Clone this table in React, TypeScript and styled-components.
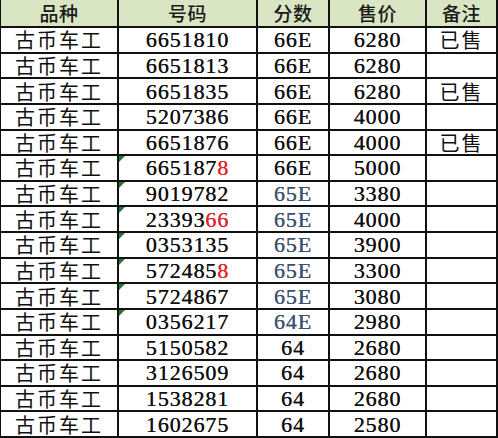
import React from "react";
import styled, { createGlobalStyle } from "styled-components";

const GlobalStyle = createGlobalStyle`
  html, body {
    margin: 0;
    padding: 0;
    background: #ffffff;
  }
`;

type Row = {
  kind: string;
  code: string;
  redTail?: number;
  score: string;
  blueScore?: boolean;
  price: string;
  note?: string;
  flag?: boolean;
};

const rows: Row[] = [
  { kind: "古币车工", code: "6651810", score: "66E", price: "6280", note: "已售" },
  { kind: "古币车工", code: "6651813", score: "66E", price: "6280" },
  { kind: "古币车工", code: "6651835", score: "66E", price: "6280", note: "已售" },
  { kind: "古币车工", code: "5207386", score: "66E", price: "4000" },
  { kind: "古币车工", code: "6651876", score: "66E", price: "4000", note: "已售" },
  { kind: "古币车工", code: "6651878", redTail: 1, score: "66E", price: "5000", flag: true },
  { kind: "古币车工", code: "9019782", score: "65E", blueScore: true, price: "3380", flag: true },
  { kind: "古币车工", code: "2339366", redTail: 2, score: "65E", blueScore: true, price: "4000", flag: true },
  { kind: "古币车工", code: "0353135", score: "65E", blueScore: true, price: "3900", flag: true },
  { kind: "古币车工", code: "5724858", redTail: 1, score: "65E", blueScore: true, price: "3300", flag: true },
  { kind: "古币车工", code: "5724867", score: "65E", blueScore: true, price: "3080", flag: true },
  { kind: "古币车工", code: "0356217", score: "64E", blueScore: true, price: "2980", flag: true },
  { kind: "古币车工", code: "5150582", score: "64", price: "2680" },
  { kind: "古币车工", code: "3126509", score: "64", price: "2680" },
  { kind: "古币车工", code: "1538281", score: "64", price: "2680" },
  { kind: "古币车工", code: "1602675", score: "64", price: "2580" },
];

const headers = ["品种", "号码", "分数", "售价", "备注"];

const Sheet = styled.div`
  display: grid;
  grid-template-columns: 118px 139px 72px 97px 71px;
  grid-template-rows: 28px repeat(16, 1fr);
  width: 498px;
  height: 438px;
  box-sizing: border-box;
  border-left: 1px solid #111;
  background: #fff;
`;

const Cell = styled.div<{ $head?: boolean; $cjk?: boolean }>`
  position: relative;
  display: flex;
  align-items: center;
  justify-content: center;
  box-sizing: border-box;
  border-right: 2px solid #111;
  border-bottom: 2px solid #111;
  background: ${(p) => (p.$head ? "#d9e5c3" : "#ffffff")};
  color: ${(p) => (p.$head ? "#1a1a1a" : "#111")};
  font-family: ${(p) =>
    p.$cjk || p.$head
      ? '"Noto Sans CJK SC", "Noto Sans", sans-serif'
      : '"Liberation Serif", "Times New Roman", serif'};
  font-size: ${(p) => (p.$head ? "19px" : p.$cjk ? "20px" : "22px")};
  font-weight: ${(p) => (p.$head ? 500 : 400)};
  letter-spacing: ${(p) => (p.$cjk ? "2px" : p.$head ? "0.5px" : "0.9px")};
  text-shadow: ${(p) => (p.$cjk || p.$head ? "none" : "0.2px 0 0 currentColor")};
  white-space: nowrap;
  line-height: 22px;
  padding-top: ${(p) => (p.$head ? "0" : "1px")};
`;

const Red = styled.span`
  color: #e0252a;
`;

const Score = styled.span<{ $blue?: boolean }>`
  color: ${(p) => (p.$blue ? "#3d5270" : "#111")};
`;

const Flag = styled.span`
  position: absolute;
  left: 0;
  top: 0;
  width: 0;
  height: 0;
  border-top: 6px solid #1f7a3a;
  border-right: 6px solid transparent;
`;

function Code({ row }: { row: Row }) {
  const n = row.redTail ?? 0;
  const head = row.code.slice(0, row.code.length - n);
  const tail = row.code.slice(row.code.length - n);
  return (
    <>
      {head}
      {n > 0 && <Red>{tail}</Red>}
    </>
  );
}

export default function App() {
  return (
    <>
      <GlobalStyle />
      <Sheet>
        {headers.map((h) => (
          <Cell key={h} $head>
            {h}
          </Cell>
        ))}
        {rows.map((r, i) => (
          <React.Fragment key={i}>
            <Cell $cjk>{r.kind}</Cell>
            <Cell>
              {r.flag && <Flag />}
              <Code row={r} />
            </Cell>
            <Cell>
              <Score $blue={r.blueScore}>{r.score}</Score>
            </Cell>
            <Cell>{r.price}</Cell>
            <Cell $cjk>{r.note ?? ""}</Cell>
          </React.Fragment>
        ))}
      </Sheet>
    </>
  );
}
